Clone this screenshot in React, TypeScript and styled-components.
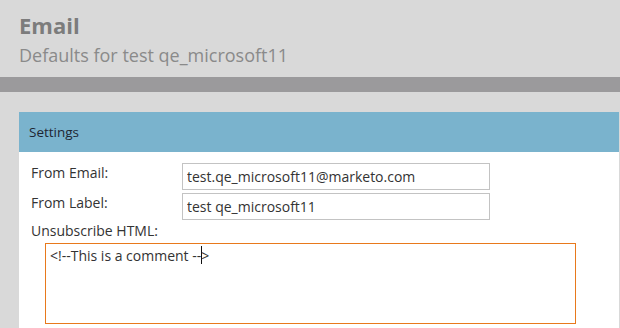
import styled, {createGlobalStyle} from 'styled-components';

const GlobalStyle = createGlobalStyle`
  html, body {
    margin: 0;
    padding: 0;
    background-color: #d9d9d9;
    font-family: 'Open Sans', 'Liberation Sans', sans-serif;
  }
`;

const Page = styled.div`
  width: 620px;
  height: 328px;
  overflow: hidden;
  background-color: #d9d9d9;
`;

const Header = styled.div`
  height: 77px;
  padding: 10px 0 0 19px;
  box-sizing: border-box;
`;

const Title = styled.h1`
  margin: 0;
  font-size: 22px;
  line-height: 30px;
  font-weight: 700;
  color: #7c7c7c;
`;

const SubTitle = styled.div`
  margin-top: 3px;
  font-size: 18px;
  line-height: 24px;
  color: #8a8a8a;
`;

const Divider = styled.div`
  height: 15px;
  background-color: #9b9a9c;
`;

const Body = styled.div`
  padding: 20px 1px 0 19px;
`;

const Panel = styled.section`
  background-color: #fff;
`;

const PanelTitle = styled.div`
  height: 40px;
  display: flex;
  align-items: center;
  padding-left: 10px;
  background-color: #7ab3cd;
  font-size: 13.5px;
  color: #1e2633;
`;

const PanelBody = styled.div`
  padding: 11px 12px 20px 12px;
`;

const FormGrid = styled.div`
  display: grid;
  grid-template-columns: 151px 308px;
  row-gap: 3px;
`;

const Label = styled.label`
  font-size: 14px;
  line-height: 18px;
  padding-top: 1px;
  color: #333;
`;

const TextInput = styled.input`
  height: 27px;
  box-sizing: border-box;
  padding: 0 4px;
  border: 1px solid #c3c3c3;
  font-family: inherit;
  font-size: 14px;
  color: #333;
  outline: none;
`;

const BlockLabel = styled(Label)`
  display: block;
  padding-top: 2px;
`;

const Editor = styled.div`
  margin: 3px 0 0 14px;
  width: 531px;
  height: 81px;
  box-sizing: border-box;
  padding: 2px 4px;
  border: 1px solid #e8791c;
  font-size: 14px;
  line-height: 19px;
  color: #333;
  white-space: pre;
`;

const Caret = styled.span`
  display: inline-block;
  width: 1px;
  height: 18px;
  margin: 0 -1px 0 0;
  vertical-align: top;
  background-color: #111;
`;

export default function App(): JSX.Element {
  return (
    <Page>
      <GlobalStyle />
      <Header>
        <Title>Email</Title>
        <SubTitle>Defaults for test qe_microsoft11</SubTitle>
      </Header>
      <Divider />
      <Body>
        <Panel>
          <PanelTitle>Settings</PanelTitle>
          <PanelBody>
            <FormGrid>
              <Label>From Email:</Label>
              <TextInput defaultValue="test.qe_microsoft11@marketo.com" />
              <Label>From Label:</Label>
              <TextInput defaultValue="test qe_microsoft11" />
            </FormGrid>
            <BlockLabel>Unsubscribe HTML:</BlockLabel>
            <Editor>
              {'<!--This is a comment --'}
              <Caret />
              {'>'}
            </Editor>
          </PanelBody>
        </Panel>
      </Body>
    </Page>
  );
}
